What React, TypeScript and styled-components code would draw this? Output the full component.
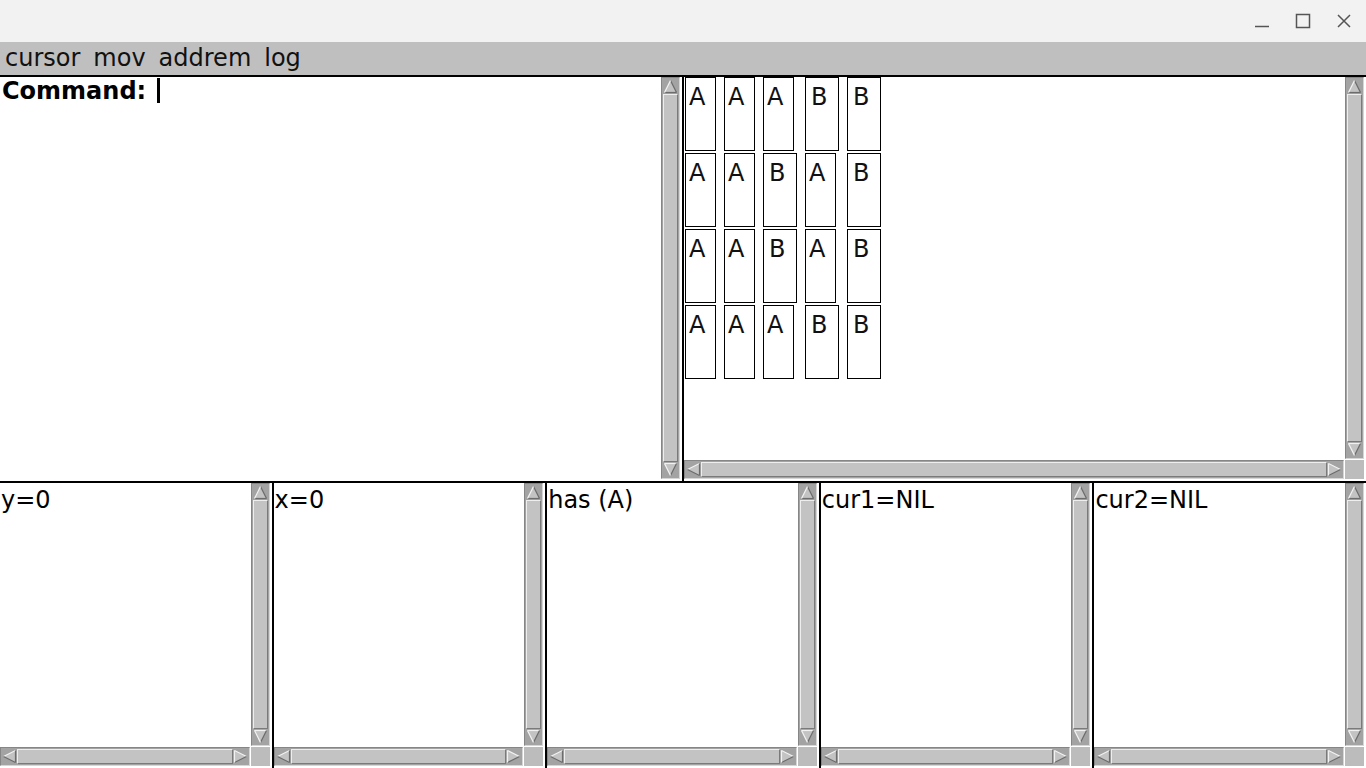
import styled, { createGlobalStyle } from 'styled-components';

const GlobalStyle = createGlobalStyle`
  html, body {
    margin: 0;
    padding: 0;
    background: #fff;
    overflow: hidden;
  }
  body {
    font-family: 'DejaVu Sans', 'Liberation Sans', sans-serif;
  }
`;

const Window = styled.div`
  width: 1366px;
  height: 768px;
  display: flex;
  flex-direction: column;
  background: #fff;
`;

const TitleBar = styled.div`
  flex: none;
  height: 42px;
  background: #f2f2f2;
  display: flex;
  justify-content: flex-end;
  align-items: center;
  gap: 13px;
  padding-right: 8px;
`;

const TitleButton = styled.div`
  width: 28px;
  height: 28px;
  display: flex;
  align-items: center;
  justify-content: center;
`;

const MenuBar = styled.div`
  flex: none;
  height: 33px;
  box-sizing: border-box;
  background: #bfbfbf;
  display: flex;
  align-items: flex-start;
  gap: 13px;
  padding: 2px 0 0 5px;
  font-size: 24px;
  line-height: 28px;
  color: #111;
`;

const MenuItem = styled.span`
  white-space: nowrap;
`;

const Frames = styled.div`
  flex: 1;
  min-height: 0;
  display: grid;
  grid-template-rows: 404px 1fr;
  row-gap: 2px;
  background: #000;
  border-top: 2px solid #000;
`;

const Row = styled.div<{ $cols: number }>`
  display: grid;
  grid-template-columns: repeat(${(p) => p.$cols}, 1fr);
  column-gap: 2px;
  min-height: 0;
`;

const Pane = styled.div<{ $hscroll?: boolean }>`
  background: #fff;
  display: grid;
  grid-template-columns: minmax(0, 1fr) 19px;
  grid-template-rows: ${(p) => (p.$hscroll ? 'minmax(0, 1fr) 19px' : 'minmax(0, 1fr)')};
  gap: 1px;
  padding: 0 2px 2px 0;
  min-width: 0;
  min-height: 0;
`;

const Content = styled.div<{ $top?: number; $left?: number; $bold?: boolean }>`
  overflow: hidden;
  padding: ${(p) => p.$top ?? 3}px 0 0 ${(p) => p.$left ?? 1}px;
  font-size: 24px;
  line-height: 28px;
  font-weight: ${(p) => (p.$bold ? 700 : 400)};
  color: #000;
  white-space: nowrap;
`;

const Caret = styled.span`
  display: inline-block;
  width: 3px;
  height: 25px;
  background: #000;
  vertical-align: -4px;
  margin-left: 2px;
`;

const Track = styled.div<{ $horizontal?: boolean }>`
  display: flex;
  flex-direction: ${(p) => (p.$horizontal ? 'row' : 'column')};
  background: #a3a3a3;
  border: 1px solid;
  border-color: #868686 #d6d6d6 #d6d6d6 #868686;
  padding: 1px;
  min-width: 0;
  min-height: 0;
`;

const ArrowBox = styled.div`
  flex: none;
  width: 15px;
  height: 15px;
`;

const Thumb = styled.div`
  flex: 1;
  background: #c3c3c3;
  border: 1px solid;
  border-color: #eeeeee #7a7a7a #7a7a7a #eeeeee;
`;

const Corner = styled.div`
  background: #bcbcbc;
`;

const Board = styled.div`
  display: grid;
  grid-template-columns: repeat(5, auto);
  justify-content: start;
  align-content: start;
  column-gap: 8px;
  row-gap: 2px;
  padding-left: 1px;
  overflow: hidden;
`;

const Cell = styled.div<{ $wide: boolean }>`
  justify-self: start;
  box-sizing: border-box;
  width: ${(p) => (p.$wide ? 34 : 31)}px;
  height: 74px;
  border: 1px solid #000;
  padding: 5px 0 0 ${(p) => (p.$wide ? 5 : 3)}px;
  font-size: 24px;
  line-height: 28px;
  color: #111;
`;

type Dir = 'up' | 'down' | 'left' | 'right';

const LIGHT = '#f2f2f2';
const DARK = '#6c6c6c';

const Arrow = ({ dir }: { dir: Dir }) => {
  // three corners and which edges are lit
  const shapes: Record<Dir, { pts: number[][]; colors: string[] }> = {
    up: { pts: [[7.5, 1.5], [13.5, 13.5], [1.5, 13.5]], colors: [DARK, DARK, LIGHT] },
    down: { pts: [[1.5, 1.5], [13.5, 1.5], [7.5, 13.5]], colors: [LIGHT, DARK, LIGHT] },
    left: { pts: [[1.5, 7.5], [13.5, 1.5], [13.5, 13.5]], colors: [LIGHT, DARK, DARK] },
    right: { pts: [[1.5, 1.5], [13.5, 7.5], [1.5, 13.5]], colors: [LIGHT, DARK, LIGHT] },
  };
  const { pts, colors } = shapes[dir];
  return (
    <ArrowBox>
      <svg width="15" height="15" viewBox="0 0 15 15">
        <polygon points={pts.map((p) => p.join(',')).join(' ')} fill="#c3c3c3" />
        {pts.map((p, i) => {
          const q = pts[(i + 1) % 3];
          return (
            <line
              key={i}
              x1={p[0]}
              y1={p[1]}
              x2={q[0]}
              y2={q[1]}
              stroke={colors[i]}
              strokeWidth="1.2"
            />
          );
        })}
      </svg>
    </ArrowBox>
  );
};

const ScrollBar = ({ horizontal }: { horizontal?: boolean }) => (
  <Track $horizontal={horizontal}>
    <Arrow dir={horizontal ? 'left' : 'up'} />
    <Thumb />
    <Arrow dir={horizontal ? 'right' : 'down'} />
  </Track>
);

const boardRows = ['AAABB', 'AABAB', 'AABAB', 'AAABB'];
const infoPanes = ['y=0', 'x=0', 'has (A)', 'cur1=NIL', 'cur2=NIL'];
const menus = ['cursor', 'mov', 'addrem', 'log'];

const App = () => {
  return (
    <Window>
      <GlobalStyle />
      <TitleBar>
        <TitleButton>
          <svg width="16" height="16" viewBox="0 0 16 16">
            <line x1="1" y1="13.5" x2="15" y2="13.5" stroke="#555" strokeWidth="1.5" />
          </svg>
        </TitleButton>
        <TitleButton>
          <svg width="16" height="16" viewBox="0 0 16 16">
            <rect x="1.5" y="1.5" width="13" height="13" fill="none" stroke="#555" strokeWidth="1.5" />
          </svg>
        </TitleButton>
        <TitleButton>
          <svg width="16" height="16" viewBox="0 0 16 16">
            <path d="M2 2 L14 14 M14 2 L2 14" stroke="#555" strokeWidth="1.5" />
          </svg>
        </TitleButton>
      </TitleBar>
      <MenuBar>
        {menus.map((m) => (
          <MenuItem key={m}>{m}</MenuItem>
        ))}
      </MenuBar>
      <Frames>
        <Row $cols={2}>
          <Pane>
            <Content $top={0} $left={2} $bold>
              Command: <Caret />
            </Content>
            <ScrollBar />
          </Pane>
          <Pane $hscroll>
            <Board>
              {boardRows.map((row, r) =>
                row.split('').map((ch, c) => (
                  <Cell key={`${r}-${c}`} $wide={ch === 'B'}>
                    {ch}
                  </Cell>
                )),
              )}
            </Board>
            <ScrollBar />
            <ScrollBar horizontal />
            <Corner />
          </Pane>
        </Row>
        <Row $cols={5}>
          {infoPanes.map((t) => (
            <Pane key={t} $hscroll>
              <Content>{t}</Content>
              <ScrollBar />
              <ScrollBar horizontal />
              <Corner />
            </Pane>
          ))}
        </Row>
      </Frames>
    </Window>
  );
};

export default App;
